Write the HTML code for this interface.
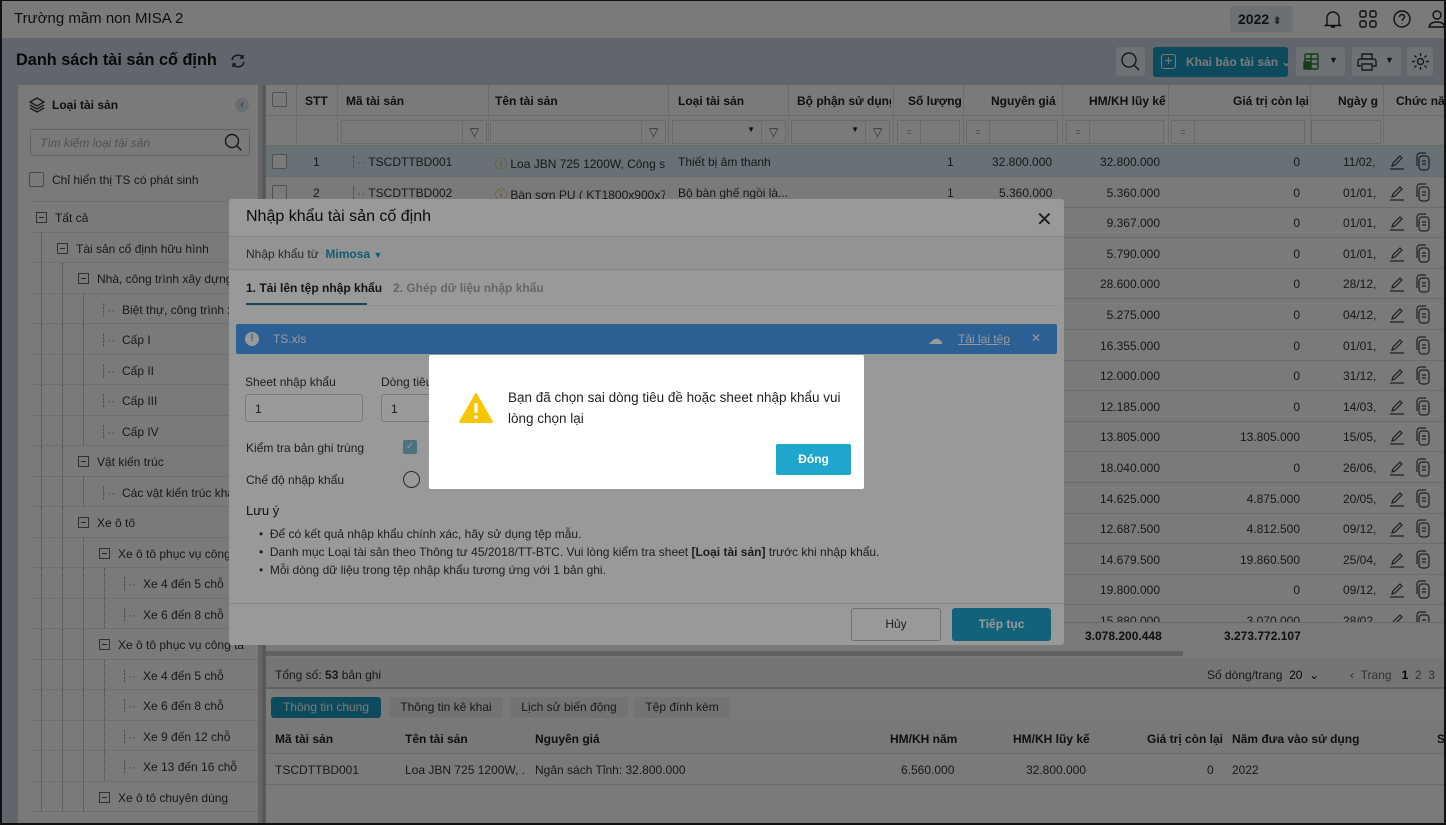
<!DOCTYPE html>
<html><head><meta charset="utf-8">
<style>
*{box-sizing:border-box;margin:0;padding:0}
body{width:1446px;height:825px;overflow:hidden;font-family:"Liberation Sans",sans-serif;font-size:12px;color:#333;background:#fff;position:relative}
.a{position:absolute}
.t{white-space:nowrap}
.ov{position:absolute;left:0;top:0;width:1446px;height:825px;background:rgba(0,0,0,.52)}
.hd{font-weight:bold;color:#222}
.row{position:absolute;left:266px;width:1180px;height:31px;border-bottom:1px solid #e4e4e4}
.tr{position:absolute;left:18px;width:240px;height:30.5px;border-bottom:1px solid #e8e8e8}
.mini{display:inline-block;width:11px;height:11px;border:1px solid #666;position:relative;vertical-align:-1px;margin-right:8px}
.mini:after{content:"";position:absolute;left:2px;right:2px;top:4px;height:1px;background:#555}
.vd{position:absolute;top:0;bottom:0;border-left:1px dotted #999}
.fin{position:absolute;top:120px;height:24px;border:1px solid #ddd;background:#fff}
</style></head><body>
<!-- top bar -->
<div class="a" style="left:0;top:0;width:1446px;height:38px;background:#fff"></div>
<div class="a t" style="left:14px;top:10px;font-size:15px;color:#222">Trường mầm non MISA 2</div>
<div class="a" style="left:1230px;top:6px;width:63px;height:26px;background:#e2ebf2;border-radius:3px"></div>
<div class="a t" style="left:1238px;top:11px;font-size:14px;font-weight:bold;color:#222">2022 <span style="font-size:10px;color:#555">⬍</span></div>
<svg class="a" style="left:1322px;top:8px" width="22" height="22" viewBox="0 0 22 22" fill="none" stroke="#222" stroke-width="1.4"><path d="M5 16V10a6 6 0 0112 0v6l1.5 1.5h-15z M9 19h4"/></svg>
<svg class="a" style="left:1357px;top:8px" width="22" height="22" viewBox="0 0 22 22" fill="none" stroke="#222" stroke-width="1.4"><rect x="3" y="3" width="6" height="6" rx="1.5"/><rect x="13" y="3" width="6" height="6" rx="1.5"/><rect x="3" y="13" width="6" height="6" rx="1.5"/><rect x="13" y="13" width="6" height="6" rx="1.5"/></svg>
<svg class="a" style="left:1391px;top:8px" width="22" height="22" viewBox="0 0 22 22" fill="none" stroke="#222" stroke-width="1.4"><circle cx="11" cy="11" r="8"/><path d="M8.5 9a2.5 2.5 0 115 0c0 1.8-2.5 2-2.5 3.8M11 15v.5"/></svg>
<svg class="a" style="left:1426px;top:8px" width="22" height="22" viewBox="0 0 22 22" fill="none" stroke="#222" stroke-width="1.4"><circle cx="11" cy="7" r="4"/><path d="M3 19c1-4 4-5 8-5s7 1 8 5z"/></svg>
<!-- header -->
<div class="a" style="left:0;top:38px;width:1446px;height:787px;background:#c9d5df"></div>
<div class="a t" style="left:16px;top:51px;font-size:16.3px;font-weight:bold;color:#111">Danh sách tài sản cố định</div>
<svg class="a" style="left:229px;top:52px" width="18" height="18" viewBox="0 0 18 18" fill="none" stroke="#333" stroke-width="1.5"><path d="M3 8a6 6 0 0111-2M15 10a6 6 0 01-11 2M14 3v3h-3M4 15v-3h3"/></svg>
<div class="a" style="left:1116px;top:47px;width:29px;height:29px;background:#e9eff4;border-radius:3px"></div>
<svg class="a" style="left:1120px;top:51px" width="21" height="21" viewBox="0 0 21 21" fill="none" stroke="#333" stroke-width="1.4"><circle cx="9" cy="9" r="7"/><path d="M14 14l5 5"/></svg>
<div class="a" style="left:1153px;top:47px;width:135px;height:30px;background:#1e9cc2;border-radius:3px"></div>
<div class="a" style="left:1161px;top:54px;width:15px;height:15px;border:1.5px solid #fff;border-radius:3px;color:#fff;font-size:14px;line-height:11px;text-align:center">+</div>
<div class="a t" style="left:1186px;top:55px;color:#fff;font-weight:bold;font-size:12px">Khai báo tài sản ⌄</div>
<div class="a" style="left:1296px;top:47px;width:49px;height:29px;background:#e9eff4;border-radius:3px"></div>
<svg class="a" style="left:1303px;top:52px" width="18" height="19" viewBox="0 0 18 19" fill="none" stroke="#2e7d32" stroke-width="1.4"><rect x="2" y="2" width="13" height="15" rx="1"/><path d="M2 7h13M2 12h13M8 2v15"/><rect x="1" y="10" width="6" height="7" fill="#2e7d32"/></svg>
<div class="a t" style="left:1329px;top:55px;font-size:9px;color:#222">▼</div>
<div class="a" style="left:1352px;top:47px;width:49px;height:29px;background:#e9eff4;border-radius:3px"></div>
<svg class="a" style="left:1356px;top:51px" width="22" height="22" viewBox="0 0 22 22" fill="none" stroke="#333" stroke-width="1.4"><path d="M6 8V3h10v5M4 8h14a2 2 0 012 2v5h-3M5 15H2v-5a2 2 0 012-2M6 13h10v6H6z"/></svg>
<div class="a t" style="left:1385px;top:55px;font-size:9px;color:#222">▼</div>
<div class="a" style="left:1407px;top:47px;width:26px;height:29px;background:#e9eff4;border-radius:3px"></div>
<svg class="a" style="left:1410px;top:51px" width="21" height="21" viewBox="0 0 21 21" fill="none" stroke="#333" stroke-width="1.4"><circle cx="10.5" cy="10.5" r="3"/><path d="M10.5 2v3M10.5 16v3M2 10.5h3M16 10.5h3M4.5 4.5l2 2M14.5 14.5l2 2M4.5 16.5l2-2M14.5 6.5l2-2"/></svg>
<!-- sidebar -->
<div class="a" style="left:18px;top:85px;width:240px;height:740px;background:#fff"></div>
<svg class="a" style="left:28px;top:96px" width="18" height="18" viewBox="0 0 18 18" fill="none" stroke="#333" stroke-width="1.3"><path d="M9 2l7 4-7 4-7-4z M2 9l7 4 7-4 M2 12l7 4 7-4"/></svg>
<div class="a t hd" style="left:52px;top:98px">Loại tài sản</div>
<div class="a" style="left:235px;top:98px;width:14px;height:14px;border-radius:7px;background:#dde6ee;color:#3373b5;font-size:10px;text-align:center;line-height:14px">‹</div>
<div class="a" style="left:30px;top:129px;width:220px;height:27px;border:1px solid #ccc;border-radius:3px"></div>
<div class="a t" style="left:40px;top:136px;color:#aaa;font-style:italic">Tìm kiếm loại tài sản</div>
<svg class="a" style="left:223px;top:132px" width="20" height="20" viewBox="0 0 20 20" fill="none" stroke="#333" stroke-width="1.4"><circle cx="9" cy="9" r="6.5"/><path d="M13.5 13.5l5 5"/></svg>
<div class="a" style="left:29px;top:172px;width:15px;height:15px;border:1px solid #999;border-radius:2px"></div>
<div class="a t" style="left:52px;top:173px">Chỉ hiển thị TS có phát sinh</div>
<div class="a" style="left:30px;top:201px;width:228px;height:1px;background:#e4e4e4"></div>
<div id="tree"></div>
<!-- splitter -->
<div class="a" style="left:262px;top:85px;width:4px;height:740px;background:#bbb"></div>
<!-- table -->
<div class="a" style="left:266px;top:85px;width:1180px;height:600px;background:#fff"></div>
<div class="a" style="left:266px;top:85px;width:1180px;height:61px;border-bottom:1px solid #ddd"></div>
<div class="a" style="left:266px;top:115px;width:1180px;height:1px;background:#e4e4e4"></div>
<div class="a" style="left:272px;top:92px;width:15px;height:15px;border:1px solid #aaa;border-radius:2px"></div>
<div id="thead"></div>
<div id="rows"></div>
<div class="a" style="left:266px;top:622px;width:1180px;height:28px;background:#fff;border-top:1px solid #ddd"></div>
<div class="a t hd" style="left:1085px;top:629px;font-size:12px">3.078.200.448</div>
<div class="a t hd" style="left:1224px;top:629px;font-size:12px">3.273.772.107</div>
<div class="a" style="left:266px;top:651px;width:917px;height:5px;background:#c8c8c8"></div>
<div class="a" style="left:266px;top:658px;width:1180px;height:30px;background:#f4f4f4"></div>
<div class="a t" style="left:275px;top:668px">Tổng số: <b>53</b> bản ghi</div>
<div class="a t" style="left:1207px;top:668px">Số dòng/trang &nbsp;<span style="color:#111">20 &nbsp;⌄</span></div>
<div class="a t" style="left:1350px;top:668px;color:#666">‹ &nbsp;Trang &nbsp; <b style="color:#111">1</b> &nbsp;2 &nbsp;3</div>
<div class="a" style="left:266px;top:687px;width:1180px;height:2px;background:#ccc"></div>
<div class="a" style="left:266px;top:689px;width:1180px;height:136px;background:#fff"></div>
<div class="a t" style="left:271px;top:697px;width:110px;height:21px;background:#1e9cc2;border-radius:3px;color:#fff;text-align:center;line-height:21px">Thông tin chung</div>
<div class="a t" style="left:389px;top:697px;width:114px;height:21px;background:#f1f1f1;text-align:center;line-height:21px">Thông tin kê khai</div>
<div class="a t" style="left:510px;top:697px;width:118px;height:21px;background:#f1f1f1;text-align:center;line-height:21px">Lịch sử biến động</div>
<div class="a t" style="left:634px;top:697px;width:96px;height:21px;background:#f1f1f1;text-align:center;line-height:21px">Tệp đính kèm</div>
<div class="a" style="left:266px;top:722px;width:1180px;height:32px;border-bottom:1px solid #e4e4e4;background:#fafafa"></div>
<div class="a" style="left:266px;top:754px;width:1180px;height:31px;border-bottom:1px solid #e4e4e4"></div>
<div class="a t hd" style="left:275px;top:732px">Mã tài sản</div>
<div class="a t hd" style="left:405px;top:732px">Tên tài sản</div>
<div class="a t hd" style="left:535px;top:732px">Nguyên giá</div>
<div class="a t hd" style="left:890px;top:732px">HM/KH năm</div>
<div class="a t hd" style="left:1013px;top:732px">HM/KH lũy kế</div>
<div class="a t hd" style="left:1147px;top:732px">Giá trị còn lại</div>
<div class="a t hd" style="left:1232px;top:732px">Năm đưa vào sử dụng</div>
<div class="a t hd" style="left:1437px;top:732px">S</div>
<div class="a t" style="left:275px;top:763px">TSCDTTBD001</div>
<div class="a t" style="left:405px;top:763px;width:120px;overflow:hidden">Loa JBN 725 1200W, ...</div>
<div class="a t" style="left:535px;top:763px">Ngân sách Tỉnh: 32.800.000</div>
<div class="a t" style="left:901px;top:763px">6.560.000</div>
<div class="a t" style="left:1026px;top:763px">32.800.000</div>
<div class="a t" style="left:1207px;top:763px">0</div>
<div class="a t" style="left:1232px;top:763px">2022</div>

<div class="ov"></div>

<!-- import dialog -->
<div class="a" style="left:229px;top:199px;width:835px;height:446px;background:#fff;border-radius:3px;overflow:hidden">
 <div class="a t" style="left:17px;top:9px;font-size:16px;color:#111">Nhập khẩu tài sản cố định</div>
 <div class="a" style="left:807px;top:8px;font-size:20px;color:#333">✕</div>
 <div class="a" style="left:0;top:37px;width:835px;height:34px;background:#f5f5f5;border-top:1px solid #ddd;border-bottom:1px solid #ddd"></div>
 <div class="a t" style="left:17px;top:48px;color:#444">Nhập khẩu từ &nbsp;<b style="color:#1e9cc2">Mimosa</b> <span style="color:#1e9cc2;font-size:9px">▼</span></div>
 <div class="a t" style="left:17px;top:82px;font-weight:bold;color:#222">1. Tải lên tệp nhập khẩu</div>
 <div class="a t" style="left:164px;top:82px;font-weight:bold;color:#aaa">2. Ghép dữ liệu nhập khẩu</div>
 <div class="a" style="left:17px;top:104px;width:121px;height:2px;background:#1e7fa0"></div>
 <div class="a" style="left:17px;top:106px;width:811px;height:1px;background:#eee"></div>
 <div class="a" style="left:7px;top:125px;width:821px;height:30px;background:#4a9ef5;border-radius:2px"></div>
 <div class="a" style="left:16px;top:133px;width:14px;height:14px;border-radius:7px;background:#fff;color:#4a9ef5;font-size:10px;font-weight:bold;text-align:center;line-height:14px">!</div>
 <div class="a t" style="left:44px;top:133px;color:#fff">TS.xls</div>
 <div class="a t" style="left:699px;top:131px;color:#fff;font-size:15px">☁</div>
 <div class="a t" style="left:729px;top:133px;color:#fff;text-decoration:underline">Tải lại tệp</div>
 <div class="a t" style="left:802px;top:132px;color:#fff">✕</div>
 <div class="a t" style="left:16px;top:176px">Sheet nhập khẩu</div>
 <div class="a t" style="left:152px;top:176px">Dòng tiêu đề</div>
 <div class="a" style="left:16px;top:195px;width:118px;height:28px;border:1px solid #ccc;border-radius:3px;padding:7px 9px">1</div>
 <div class="a" style="left:152px;top:195px;width:118px;height:28px;border:1px solid #ccc;border-radius:3px;padding:7px 9px">1</div>
 <div class="a t" style="left:17px;top:242px">Kiểm tra bản ghi trùng</div>
 <div class="a" style="left:174px;top:241px;width:14px;height:14px;background:#7fbfd6;border-radius:2px;color:#fff;font-size:10px;text-align:center;line-height:14px">✓</div>
 <div class="a t" style="left:17px;top:274px">Chế độ nhập khẩu</div>
 <div class="a" style="left:174px;top:272px;width:17px;height:17px;border:1.5px solid #444;border-radius:50%"></div>
 <div class="a t" style="left:17px;top:304px;font-size:13px;color:#222">Lưu ý</div>
 <div class="a t" style="left:30px;top:326px;line-height:18px;font-size:12px">• &nbsp;Để có kết quả nhập khẩu chính xác, hãy sử dụng tệp mẫu.<br>• &nbsp;Danh mục Loại tài sản theo Thông tư 45/2018/TT-BTC. Vui lòng kiểm tra sheet <b>[Loại tài sản]</b> trước khi nhập khẩu.<br>• &nbsp;Mỗi dòng dữ liệu trong tệp nhập khẩu tương ứng với 1 bản ghi.</div>
 <div class="a" style="left:0;top:404px;width:835px;height:1px;background:#ddd"></div>
 <div class="a t" style="left:622px;top:409px;width:90px;height:33px;border:1px solid #bbb;border-radius:3px;text-align:center;line-height:31px">Hủy</div>
 <div class="a t" style="left:723px;top:409px;width:99px;height:33px;background:#1fa6cc;border-radius:3px;color:#fff;font-weight:bold;text-align:center;line-height:33px">Tiếp tục</div>
 <div class="a" style="left:0;top:0;width:835px;height:446px;background:rgba(0,0,0,.4)"></div>
</div>
<!-- message box -->
<div class="a" style="left:429px;top:355px;width:435px;height:134px;background:#fff;border-radius:2px"></div>
<svg class="a" style="left:458px;top:392px" width="36" height="32" viewBox="0 0 36 32"><path d="M18 2L34 30H2z" fill="#f7c600" stroke="#f7c600" stroke-linejoin="round" stroke-width="2"/><rect x="16.3" y="11" width="3.4" height="10" rx="1" fill="#fff"/><circle cx="18" cy="25" r="1.9" fill="#fff"/></svg>
<div class="a" style="left:508px;top:387px;font-size:13.5px;line-height:21px;color:#222;width:340px">Bạn đã chọn sai dòng tiêu đề hoặc sheet nhập khẩu vui lòng chọn lại</div>
<div class="a t" style="left:776px;top:444px;width:75px;height:31px;background:#1fa6cc;border-radius:2px;color:#fff;font-weight:bold;text-align:center;line-height:31px">Đóng</div>
<div class="a" style="left:0;top:0;width:1446px;height:825px;border:2px solid #111;border-top-width:1px;border-right-width:2px;pointer-events:none"></div>
<script>
(function(){
var h='';
var tree=[[0,'Tất cả',1],[1,'Tài sản cố định hữu hình',1],[2,'Nhà, công trình xây dựng',1],[3,'Biệt thự, công trình xâ',0],[3,'Cấp I',0],[3,'Cấp II',0],[3,'Cấp III',0],[3,'Cấp IV',0],[2,'Vật kiến trúc',1],[3,'Các vật kiến trúc khác',0],[2,'Xe ô tô',1],[3,'Xe ô tô phục vụ công',1],[4,'Xe 4 đến 5 chỗ',0],[4,'Xe 6 đến 8 chỗ',0],[3,'Xe ô tô phục vụ công tá',1],[4,'Xe 4 đến 5 chỗ',0],[4,'Xe 6 đến 8 chỗ',0],[4,'Xe 9 đến 12 chỗ',0],[4,'Xe 13 đến 16 chỗ',0],[3,'Xe ô tô chuyên dùng',1]];
tree.forEach(function(r,i){var top=202+i*30.5;var lv=r[0];var x=36+lv*21+(r[2]?0:1);
var d='<div class="tr" style="top:'+top+'px;left:30px;width:228px">';for(var k=1;k<=lv;k++){d+='<div class="vd" style="left:'+(k*21-10)+'px"></div>';}d+='</div>';h+=d;
h+='<div class="a t" style="left:'+x+'px;top:'+(top+9)+'px;width:'+(258-x)+'px;overflow:hidden">'+(r[2]?'<span class="mini"></span>':'<span style="color:#999;display:inline-block;width:22px">┊··</span>')+r[1]+'</div>';});
document.getElementById('tree').innerHTML=h;
h='';
var cols=[[296,'STT',305],[337,'Mã tài sản',346],[488,'Tên tài sản',495],[668,'Loại tài sản',678],[788,'Bộ phận sử dụng',797],[893,'Số lượng',908],[963,'Nguyên giá',991],[1062,'HM/KH lũy kế',1089],[1168,'Giá trị còn lại',1233],[1310,'Ngày g',1338],[1383,'Chức năng',1396]];
cols.forEach(function(c,i){var nx=(cols[i+1]?cols[i+1][0]:1446);h+='<div class="a" style="left:'+c[0]+'px;top:85px;width:1px;height:61px;background:#e4e4e4"></div><div class="a t hd" style="left:'+c[2]+'px;top:94px;width:'+(nx-c[2]-2)+'px;overflow:hidden">'+c[1]+'</div>';});
var f=[[341,146,1],[490,176,1],[672,114,2],[791,99,2],[897,63,3],[966,92,3],[1066,98,3],[1171,134,3],[1311,70,0]];
f.forEach(function(a){h+='<div class="fin" style="left:'+a[0]+'px;width:'+a[1]+'px">';if(a[2]==3)h+='<div style="position:absolute;left:0;top:0;width:23px;height:22px;border-right:1px solid #ddd;text-align:center;line-height:22px;color:#888;font-size:9px">=</div>';if(a[2]==1||a[2]==2)h+='<div style="position:absolute;right:0;top:0;width:24px;height:22px;border-left:1px solid #ddd;text-align:center;line-height:22px;color:#666">▽</div>';if(a[2]==2)h+='<div style="position:absolute;right:30px;top:4px;font-size:8px;color:#222">▼</div>';h+='</div>';});
document.getElementById('thead').innerHTML=h;
h='';
var hm=['32.800.000','5.360.000','9.367.000','5.790.000','28.600.000','5.275.000','16.355.000','12.000.000','12.185.000','13.805.000','18.040.000','14.625.000','12.687.500','14.679.500','19.800.000','15.880.000'];
var gt=['0','0','0','0','0','0','0','0','0','13.805.000','0','4.875.000','4.812.500','19.860.500','0','3.070.000'];
var dt=['11/02,','01/01,','01/01,','01/01,','28/12,','04/12,','01/01,','31/12,','14/03,','15/05,','26/06,','20/05,','09/12,','25/04,','09/12,','28/02,'];
for(var i=0;i<16;i++){var top=146+i*30.6;var y=top+9;
h+='<div class="row" style="top:'+top+'px;'+(i==0?'background:#d9ecf5':'')+'"></div>';
h+='<div class="a" style="left:272px;top:'+(top+8)+'px;width:15px;height:15px;border:1px solid #aaa;border-radius:2px;background:#fff"></div>';
h+='<div class="a t" style="right:'+(1446-1160)+'px;top:'+y+'px">'+hm[i]+'</div>';
h+='<div class="a t" style="right:'+(1446-1300)+'px;top:'+y+'px">'+gt[i]+'</div>';
h+='<div class="a t" style="left:1343px;top:'+y+'px;width:35px;overflow:hidden">'+dt[i]+'</div>';
h+='<svg class="a" style="left:1387px;top:'+(top+6)+'px" width="20" height="20" viewBox="0 0 20 20" fill="none" stroke="#444" stroke-width="1.2"><path d="M5 14l1-3 7-7 2 2-7 7z M3 17h14"/></svg>';
h+='<svg class="a" style="left:1413px;top:'+(top+5)+'px" width="20" height="22" viewBox="0 0 20 22" fill="none" stroke="#444" stroke-width="1.2"><rect x="6" y="5" width="10" height="14" rx="3"/><path d="M4 15V5a3 3 0 013-3h6 M9 10h4M9 13h4"/></svg>';
}
h+='<div class="a t" style="left:313px;top:155px">1</div><div class="a t" style="left:313px;top:186px">2</div>';
h+='<div class="a t" style="left:350px;top:155px"><span style="color:#999">┆··</span> TSCDTTBD001</div><div class="a t" style="left:350px;top:186px"><span style="color:#999">┆··</span> TSCDTTBD002</div>';
h+='<div class="a t" style="left:495px;top:155px;width:170px;overflow:hidden"><span style="color:#e0a000">ⓘ</span> Loa JBN 725 1200W, Công s...</div><div class="a t" style="left:495px;top:186px;width:170px;overflow:hidden"><span style="color:#e0a000">ⓘ</span> Bàn sơn PU ( KT1800x900x7...</div>';
h+='<div class="a t" style="left:678px;top:155px">Thiết bị âm thanh</div><div class="a t" style="left:678px;top:186px">Bộ bàn ghế ngồi là...</div>';
h+='<div class="a t" style="left:947px;top:155px">1</div><div class="a t" style="left:947px;top:186px">1</div>';
h+='<div class="a t" style="left:992px;top:155px">32.800.000</div><div class="a t" style="left:999px;top:186px">5.360.000</div>';
document.getElementById('rows').innerHTML=h;
})();
</script>
</body></html>
